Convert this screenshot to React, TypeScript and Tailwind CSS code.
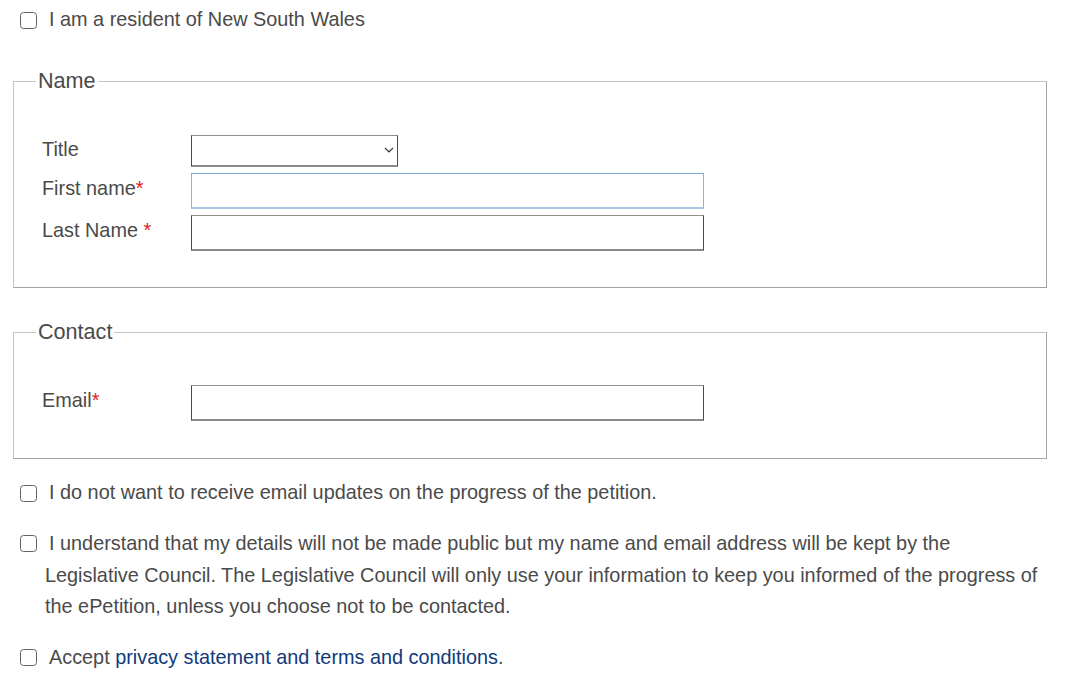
import React from "react";

function Box() {
  return (
    <span className="inline-block w-[17px] h-[17px] border border-[#626262] rounded-[3.5px] bg-white align-middle shrink-0" />
  );
}

function Req() {
  return <span className="text-[#e3211c]">*</span>;
}

function Input({ focused }: { focused?: boolean }) {
  return (
    <div
      className={
        focused
          ? "w-[513px] h-[36px] border border-[#8db3dc] border-t-[#7aa5d4] border-b-[2px] border-b-[#a9c6e6] bg-white"
          : "w-[513px] h-[36px] border border-[#4c4c4c] border-t-[#8f8f8f] border-b-[2px] border-b-[#8a8a8a] bg-white"
      }
    />
  );
}

export default function App() {
  return (
    <div className="w-[1080px] h-[692px] bg-white text-[#4a4a4a] font-['Liberation_Sans',Arial,sans-serif] text-[19.85px] overflow-hidden">
      <div className="pl-[13px] w-[1047px]">
        <div className="h-[40px] flex items-center pl-[7px]">
          <Box />
          <span className="ml-[12px] leading-none">I am a resident of New South Wales</span>
        </div>

        <fieldset className="mt-[28px] border border-[#c4c4c4] border-r-[#a3a3a3] border-b-[#a3a3a3] px-[22px] pb-[36px]">
          <legend className="px-[2px] text-[21.6px] leading-[26px] text-[#4a4a4a]">Name</legend>
          <div className="pl-[6px] pt-[41px] flex flex-col gap-[6px]">
            <div className="flex items-center h-[32px]">
              <span className="w-[149px] -mt-[2px]">Title</span>
              <div className="relative w-[207px] h-[32px] border border-[#4c4c4c] border-t-[#8f8f8f] border-b-[2px] border-b-[#8a8a8a] bg-white">
                <svg className="absolute right-[3px] top-[11px]" width="10" height="7" viewBox="0 0 10 7">
                  <path d="M1 1 L5 5 L9 1" fill="none" stroke="#333" strokeWidth="1.1" />
                </svg>
              </div>
            </div>
            <div className="flex items-center h-[36px]">
              <span className="w-[149px] -mt-[5px]">
                First name<Req />
              </span>
              <Input focused />
            </div>
            <div className="flex items-center h-[36px]">
              <span className="w-[149px] -mt-[4px]">
                Last Name <Req />
              </span>
              <Input />
            </div>
          </div>
        </fieldset>

        <fieldset className="mt-[31px] border border-[#c4c4c4] border-r-[#a3a3a3] border-b-[#a3a3a3] px-[22px] pb-[37px]">
          <legend className="px-[2px] text-[21.6px] leading-[26px] text-[#4a4a4a]">Contact</legend>
          <div className="pl-[6px] pt-[40px]">
            <div className="flex items-center h-[36px]">
              <span className="w-[149px] -mt-[4px]">
                Email<Req />
              </span>
              <Input />
            </div>
          </div>
        </fieldset>

        <div className="mt-[18px] h-[32px] flex items-center pl-[7px]">
          <Box />
          <span className="ml-[12px] leading-none">I do not want to receive email updates on the progress of the petition.</span>
        </div>

        <p className="mt-[19px] pl-[32px] indent-[-25px] leading-[31.5px] whitespace-nowrap">
          <span className="inline-block w-[17px] h-[17px] border border-[#626262] rounded-[3.5px] bg-white align-[-2px] mr-[12px]" />
          I understand that my details will not be made public but my name and email address will be kept by the
          <br />
          Legislative Council. The Legislative Council will only use your information to keep you informed of the progress of
          <br />
          the ePetition, unless you choose not to be contacted.
        </p>

        <div className="mt-[19px] h-[32px] flex items-center pl-[7px]">
          <Box />
          <span className="ml-[12px] leading-none">
            Accept <span className="text-[#0f3a7a]">privacy statement and terms and conditions</span>.
          </span>
        </div>
      </div>
    </div>
  );
}
